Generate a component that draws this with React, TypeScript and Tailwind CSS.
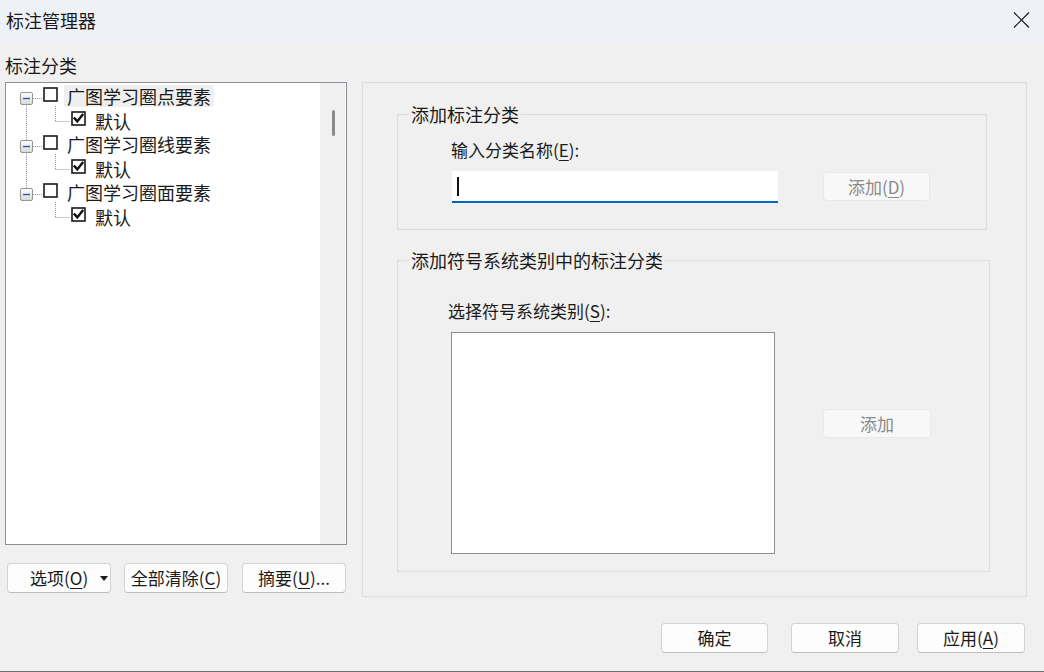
import React from "react";

const font = { fontFamily: '"Microsoft YaHei", "Noto Sans CJK SC", "Noto Sans", sans-serif' };

function Key({ k }: { k: string }) {
  return (
    <>
      (<span className="underline underline-offset-[3px] decoration-1">{k}</span>)
    </>
  );
}

function CheckBox({ checked }: { checked?: boolean }) {
  return (
    <svg width="15" height="15" viewBox="0 0 15 15" className="shrink-0 mt-[2px]">
      <rect x="1" y="1" width="13" height="13" fill="#fff" stroke="#1a1a1a" strokeWidth="1.6" />
      {checked && (
        <path d="M3.6 7.4 L6.3 10.4 L11.4 4" fill="none" stroke="#111" strokeWidth="2.4" strokeLinecap="square" />
      )}
    </svg>
  );
}

function ParentLines({ first, last }: { first: boolean; last: boolean }) {
  return (
    <svg width="37" height="24" className="shrink-0 overflow-visible">
      <defs>
        <linearGradient id="exp" x1="0" y1="0" x2="0" y2="1">
          <stop offset="0" stopColor="#ffffff" />
          <stop offset="1" stopColor="#d8d8d8" />
        </linearGradient>
      </defs>
      {!first && <line x1="20.5" y1="0" x2="20.5" y2="7.5" stroke="#9a9a9a" strokeDasharray="1 1" />}
      {!last && <line x1="20.5" y1="19.5" x2="20.5" y2="24" stroke="#9a9a9a" strokeDasharray="1 1" />}
      <line x1="27" y1="13.5" x2="37" y2="13.5" stroke="#9a9a9a" strokeDasharray="1 1" />
      <rect x="14.5" y="7.5" width="12" height="12" rx="1.5" fill="url(#exp)" stroke="#959595" />
      <line x1="17" y1="13.5" x2="24" y2="13.5" stroke="#3556a5" strokeWidth="1.4" />
    </svg>
  );
}

function ChildLines({ last }: { last: boolean }) {
  return (
    <svg width="65" height="24" className="shrink-0 overflow-visible">
      {!last && <line x1="20.5" y1="0" x2="20.5" y2="24" stroke="#9a9a9a" strokeDasharray="1 1" />}
      <line x1="49.5" y1="-3" x2="49.5" y2="12.5" stroke="#9a9a9a" strokeDasharray="1 1" />
      <line x1="49.5" y1="12.5" x2="64" y2="12.5" stroke="#9a9a9a" strokeDasharray="1 1" />
    </svg>
  );
}

const groups = ["广图学习圈点要素", "广图学习圈线要素", "广图学习圈面要素"];

function Btn({
  children,
  className = "",
  disabled,
}: {
  children: React.ReactNode;
  className?: string;
  disabled?: boolean;
}) {
  return (
    <div
      className={`flex items-center justify-center rounded-[4px] border text-[17px] leading-[24px] ${
        disabled
          ? "bg-[#f8f8f8] border-[#e9e9e9] text-[#8a8a8a]"
          : "bg-[#fdfdfd] border-[#d3d3d3] border-b-[#bdbdbd] text-[#1a1a1a]"
      } ${className}`}
    >
      {children}
    </div>
  );
}

export default function App() {
  return (
    <div
      className="w-[1044px] h-[672px] bg-[#f0f0f0] flex flex-col overflow-hidden text-[#1a1a1a] border-b border-[#707070]"
      style={font}
    >
      {/* Title bar */}
      <header className="h-[43px] shrink-0 bg-[#eef2f7] flex items-center justify-between pl-[6px] pr-[14px]">
        <span className="text-[18px] leading-[24px] -mt-[4px]">标注管理器</span>
        <svg width="17" height="16" viewBox="0 0 17 16" className="-mt-[4px]">
          <path d="M1 0.5 L16 15.5 M16 0.5 L1 15.5" stroke="#1a1a1a" strokeWidth="1.2" />
        </svg>
      </header>

      <div className="h-[554px] shrink-0 flex">
        {/* Left column */}
        <div className="w-[357px] ml-[5px] flex flex-col">
          <div className="h-[39px] pt-[10px] text-[18px] leading-[24px]">标注分类</div>

          <div className="h-[463px] w-[342px] border border-[#8a8f98] bg-white flex">
            <div className="flex-1 pt-[2px] text-[18px] leading-[20px]">
              {groups.map((g, i) => (
                <React.Fragment key={g}>
                  <div className="h-[24px] flex items-start">
                    <ParentLines first={i === 0} last={i === groups.length - 1} />
                    <CheckBox />
                    <span
                      className={`ml-[6px] px-[3px] h-[22px] pt-[1px] ${i === 0 ? "bg-[#efefef]" : ""}`}
                    >
                      {g}
                    </span>
                  </div>
                  <div className="h-[24px] flex items-start">
                    <ChildLines last={i === groups.length - 1} />
                    <CheckBox checked />
                    <span className="ml-[9px] h-[22px] pt-[2px]">默认</span>
                  </div>
                </React.Fragment>
              ))}
            </div>
            <div className="w-[25px] mr-[1px] bg-[#f0f0f0] flex justify-center pl-[1px]">
              <div className="mt-[27px] w-[3px] h-[26px] rounded-full bg-[#8a8a8a]" />
            </div>
          </div>

          <div className="mt-[18px] flex">
            <Btn className="ml-[2px] w-[104px] h-[30px] justify-start pl-[22px]">
              选项<Key k="O" />
              <svg width="8" height="5" viewBox="0 0 8 5" className="ml-[12px]">
                <path d="M0 0 H8 L4 5 Z" fill="#1a1a1a" />
              </svg>
            </Btn>
            <Btn className="ml-[13px] w-[104px] h-[30px]">
              全部清除<Key k="C" />
            </Btn>
            <Btn className="ml-[14px] w-[104px] h-[30px]">
              摘要<Key k="U" />...
            </Btn>
          </div>
        </div>

        {/* Right panel */}
        <div className="mt-[39px] w-[665px] h-[515px] border border-[#dcdcdc] flex flex-col">
          {/* Group 1 */}
          <div className="relative ml-[34px] mt-[31px] w-[590px] h-[116px] border border-[#dcdcdc] flex flex-col">
            <span className="absolute -top-[13px] left-[11px] px-[2px] bg-[#f0f0f0] text-[18px] leading-[24px]">
              添加标注分类
            </span>
            <div className="mt-[23px] pl-[53px] text-[17px] leading-[24px]">
              输入分类名称<Key k="E" />:
            </div>
            <div className="mt-[9px] pl-[54px] flex items-start">
              <div className="w-[326px] h-[32px] bg-white border-b-[2px] border-[#0067c0] flex items-center">
                <div className="ml-[5px] w-[2px] h-[19px] bg-[#111]" />
              </div>
              <Btn disabled className="ml-[45px] mt-[1px] w-[107px] h-[29px]">
                添加<Key k="D" />
              </Btn>
            </div>
          </div>

          {/* Group 2 */}
          <div className="relative ml-[34px] mt-[30px] w-[593px] h-[312px] border border-[#dcdcdc] flex flex-col">
            <span className="absolute -top-[13px] left-[11px] px-[2px] bg-[#f0f0f0] text-[18px] leading-[24px]">
              添加符号系统类别中的标注分类
            </span>
            <div className="mt-[38px] pl-[50px] text-[17px] leading-[24px]">
              选择符号系统类别<Key k="S" />:
            </div>
            <div className="mt-[9px] pl-[53px] flex items-start">
              <div className="w-[324px] h-[222px] bg-white border border-[#8a8f98]" />
              <Btn disabled className="ml-[48px] mt-[77px] w-[108px] h-[29px]">
                添加
              </Btn>
            </div>
          </div>
        </div>
      </div>

      {/* Bottom buttons */}
      <div className="mt-[26px] flex">
        <Btn className="ml-[661px] w-[107px] h-[30px]">确定</Btn>
        <Btn className="ml-[23px] w-[108px] h-[30px]">取消</Btn>
        <Btn className="ml-[18px] w-[108px] h-[30px]">
          应用<Key k="A" />
        </Btn>
      </div>
    </div>
  );
}
